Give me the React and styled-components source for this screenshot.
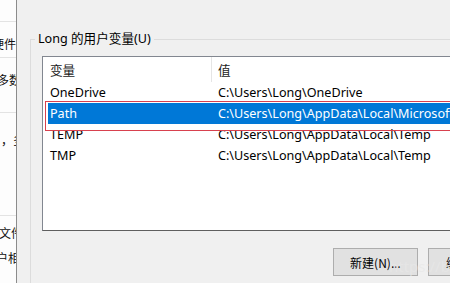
import React from "react";
import styled, { createGlobalStyle } from "styled-components";

const Global = createGlobalStyle`
  html, body {
    margin: 0;
    padding: 0;
    width: 450px;
    height: 283px;
    overflow: hidden;
    background: #f0f0f0;
    font-family: "Noto Sans", "Noto Sans CJK SC", sans-serif;
    font-size: 12.6px;
    color: #000;
  }
`;

const Screen = styled.div`
  display: flex;
  width: 450px;
  height: 283px;
  overflow: hidden;
  position: relative;
`;

const BackWindow = styled.div`
  flex: 0 0 16px;
  display: flex;
  flex-direction: column;
  background: #fdfdfd;
  border-right: 1px solid #8c8c8c;
  overflow: hidden;
`;

const BackBlock = styled.div`
  height: ${(p) => p.h}px;
  box-sizing: border-box;
  flex-shrink: 0;
  border-bottom: ${(p) => (p.last ? "none" : "1px solid #e3e3e3")};
  display: flex;
  flex-direction: column;
  padding-top: ${(p) => p.pt || 0}px;
  gap: ${(p) => p.gap || 0}px;
`;

const Fragment = styled.span`
  display: block;
  white-space: nowrap;
  line-height: 14px;
  font-size: 12px;
  margin-left: ${(p) => p.shift}px;
  font-family: "Noto Sans CJK SC", sans-serif;
  color: #111;
`;

const Dialog = styled.div`
  flex: 1;
  background: #f0f0f0;
  padding: 31px 0 0 13px;
  position: relative;
`;

const Group = styled.fieldset`
  margin: 0;
  width: 590px;
  box-sizing: border-box;
  border: 1px solid #dcdcdc;
  border-bottom: none;
  padding: 9px 11px 0 11px;
  height: 300px;
`;

const Legend = styled.legend`
  padding: 0 3px;
  margin-left: -7px;
  font-size: 12.6px;
  line-height: 16px;
  color: #000;
`;

const List = styled.div`
  height: 175px;
  box-sizing: border-box;
  background: #fff;
  border: 1px solid #828790;
  border-bottom-color: #5f5f5f;
  position: relative;
`;

const Header = styled.div`
  display: flex;
  height: 25px;
`;

const HeadCell = styled.div`
  flex: 0 0 ${(p) => p.w}px;
  box-sizing: border-box;
  padding-left: ${(p) => p.pl}px;
  display: flex;
  align-items: center;
  border-right: ${(p) => (p.sep ? "1px solid #e5e5e5" : "none")};
  font-family: "Noto Sans CJK SC", sans-serif;
  color: #1a1a1a;
`;

const Row = styled.div`
  display: flex;
  height: 21px;
  align-items: center;
  margin-left: ${(p) => (p.selected ? 5 : 0)}px;
  background: ${(p) => (p.selected ? "#0078d7" : "transparent")};
  color: ${(p) => (p.selected ? "#fff" : "#000")};
  white-space: nowrap;
`;

const Cell = styled.div`
  flex: 0 0 ${(p) => p.w}px;
  box-sizing: border-box;
  padding-left: ${(p) => p.pl}px;
  overflow: hidden;
`;

const Mark = styled.div`
  position: absolute;
  left: 2px;
  top: 44px;
  width: 600px;
  height: 28px;
  border: 1px solid #d8414e;
  pointer-events: none;
`;

const ButtonRow = styled.div`
  display: flex;
  justify-content: flex-end;
  gap: 10px;
  margin-top: 17px;
`;

const Button = styled.button`
  width: 85px;
  height: 28px;
  box-sizing: border-box;
  background: #e1e1e1;
  border: 1px solid #adadad;
  font-family: "Noto Sans CJK SC", sans-serif;
  font-size: 12px;
  color: #000;
  padding: 0;
`;

const Watermark = styled.div`
  position: absolute;
  left: 372px;
  top: 256px;
  font-size: 15px;
  color: rgba(232, 232, 232, 0.7);
  white-space: nowrap;
  pointer-events: none;
`;

const rows = [
  ["OneDrive", "C:\\Users\\Long\\OneDrive"],
  ["Path", "C:\\Users\\Long\\AppData\\Local\\Microsoft\\WindowsApps;"],
  ["TEMP", "C:\\Users\\Long\\AppData\\Local\\Temp"],
  ["TMP", "C:\\Users\\Long\\AppData\\Local\\Temp"],
];

export default function App() {
  return (
    <Screen>
      <Global />
      <BackWindow>
        <BackBlock h={22} />
        <BackBlock h={36} pt={15}>
          <Fragment shift={-8}>硬件设置</Fragment>
        </BackBlock>
        <BackBlock h={55} pt={15}>
          <Fragment shift={-3}>多数设置</Fragment>
        </BackBlock>
        <BackBlock h={103} pt={20}>
          <Fragment shift={1}>，多个</Fragment>
        </BackBlock>
        <BackBlock h={70} pt={10} gap={11} last>
          <Fragment shift={-1}>文件</Fragment>
          <Fragment shift={-4}>户相关</Fragment>
        </BackBlock>
      </BackWindow>
      <Dialog>
        <Group>
          <Legend>Long 的用户变量(U)</Legend>
          <List>
            <Header>
              <HeadCell w={169} pl={7} sep>
                变量
              </HeadCell>
              <HeadCell w={300} pl={6}>
                值
              </HeadCell>
            </Header>
            {rows.map(([name, value]) => (
              <Row key={name} selected={name === "Path"}>
                <Cell w={name === "Path" ? 164 : 169} pl={name === "Path" ? 2 : 7}>
                  {name}
                </Cell>
                <Cell w={390} pl={6}>
                  {value}
                </Cell>
              </Row>
            ))}
            <Mark />
          </List>
          <ButtonRow>
            <Button>新建(N)...</Button>
            <Button>编辑(E)...</Button>
            <Button>删除(D)</Button>
          </ButtonRow>
        </Group>
        <Watermark>https://blog</Watermark>
      </Dialog>
    </Screen>
  );
}
